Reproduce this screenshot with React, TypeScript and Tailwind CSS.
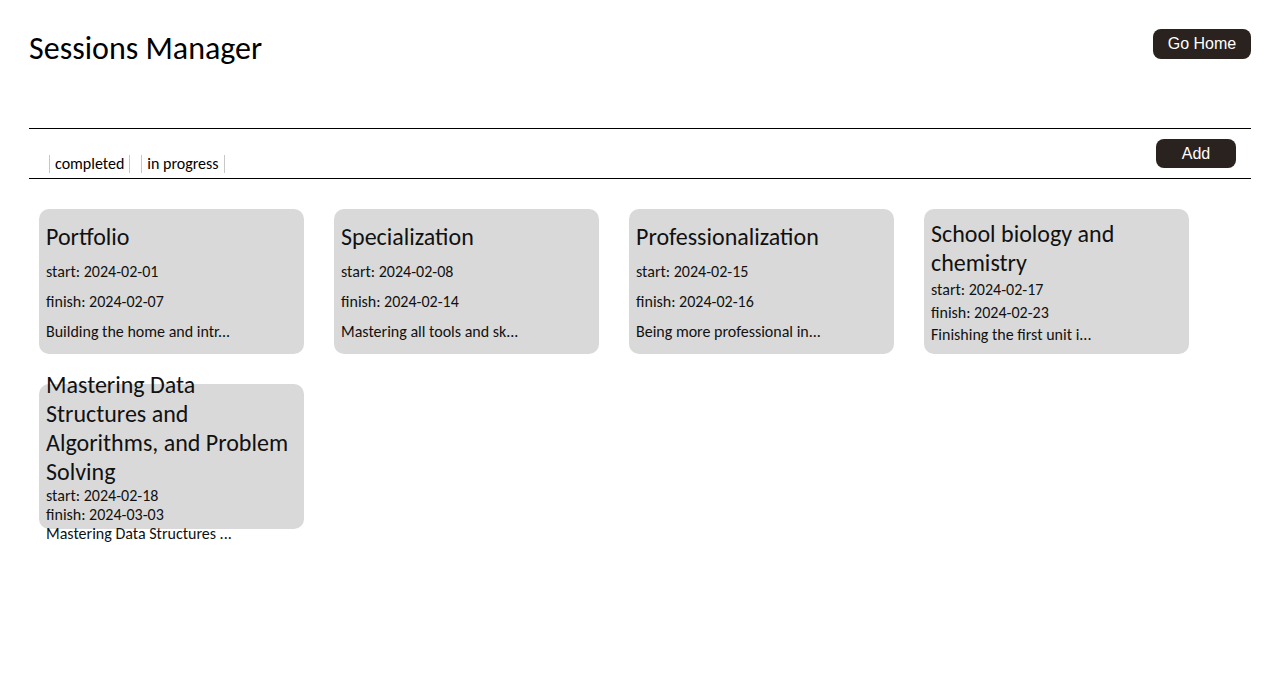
import React from "react";

interface Session {
  title: string;
  start: string;
  finish: string;
  description: string;
}

const sessions: Session[] = [
  {
    title: "Portfolio",
    start: "2024-02-01",
    finish: "2024-02-07",
    description: "Building the home and intr...",
  },
  {
    title: "Specialization",
    start: "2024-02-08",
    finish: "2024-02-14",
    description: "Mastering all tools and sk...",
  },
  {
    title: "Professionalization",
    start: "2024-02-15",
    finish: "2024-02-16",
    description: "Being more professional in...",
  },
  {
    title: "School biology and chemistry",
    start: "2024-02-17",
    finish: "2024-02-23",
    description: "Finishing the first unit i...",
  },
  {
    title: "Mastering Data Structures and Algorithms, and Problem Solving",
    start: "2024-02-18",
    finish: "2024-03-03",
    description: "Mastering Data Structures ...",
  },
];

function SessionCard({ session }: { session: Session }) {
  return (
    <div className="w-[265px] h-[145px] bg-[#d9d9d9] rounded-[10px] px-[7px] py-2 flex flex-col justify-center">
      <div className="min-h-full shrink-0 flex flex-col justify-around text-[#111]">
        <h2 className="text-[24px] leading-[29px]">{session.title}</h2>
        <p className="text-[16px] leading-[19px]">start: {session.start}</p>
        <p className="text-[16px] leading-[19px]">finish: {session.finish}</p>
        <p className="text-[16px] leading-[19px]">{session.description}</p>
      </div>
    </div>
  );
}

export default function App() {
  return (
    <div
      className="min-h-screen bg-white px-[29px] text-black"
      style={{ fontFamily: "Carlito, Lato, sans-serif" }}
    >
      <div className="flex justify-between items-start pt-[29px] h-[128px]">
        <h1 className="text-[32px] leading-[40px]">Sessions Manager</h1>
        <button
          className="h-[30px] w-[98px] bg-[#2a221e] text-white rounded-[8px] text-[16px]"
          style={{ fontFamily: "'Liberation Sans', Arial, sans-serif" }}
        >
          Go Home
        </button>
      </div>

      <div className="border-t border-b border-black h-[51px] flex items-end justify-between pl-5 pr-[15px]">
        <div className="flex gap-[11px] pb-[5px] text-[16px] leading-[18px]">
          <span className="border-x border-[#c8c8c8] px-[5px]">completed</span>
          <span className="border-x border-[#c8c8c8] px-[5px]">in progress</span>
        </div>
        <button
          className="h-[29px] w-[80px] bg-[#2a221e] text-white rounded-[8px] text-[16px] mb-[10px]"
          style={{ fontFamily: "'Liberation Sans', Arial, sans-serif" }}
        >
          Add
        </button>
      </div>

      <div className="flex flex-wrap gap-[30px] px-[10px] pt-[30px]">
        {sessions.map((s, i) => (
          <SessionCard key={i} session={s} />
        ))}
      </div>
    </div>
  );
}
